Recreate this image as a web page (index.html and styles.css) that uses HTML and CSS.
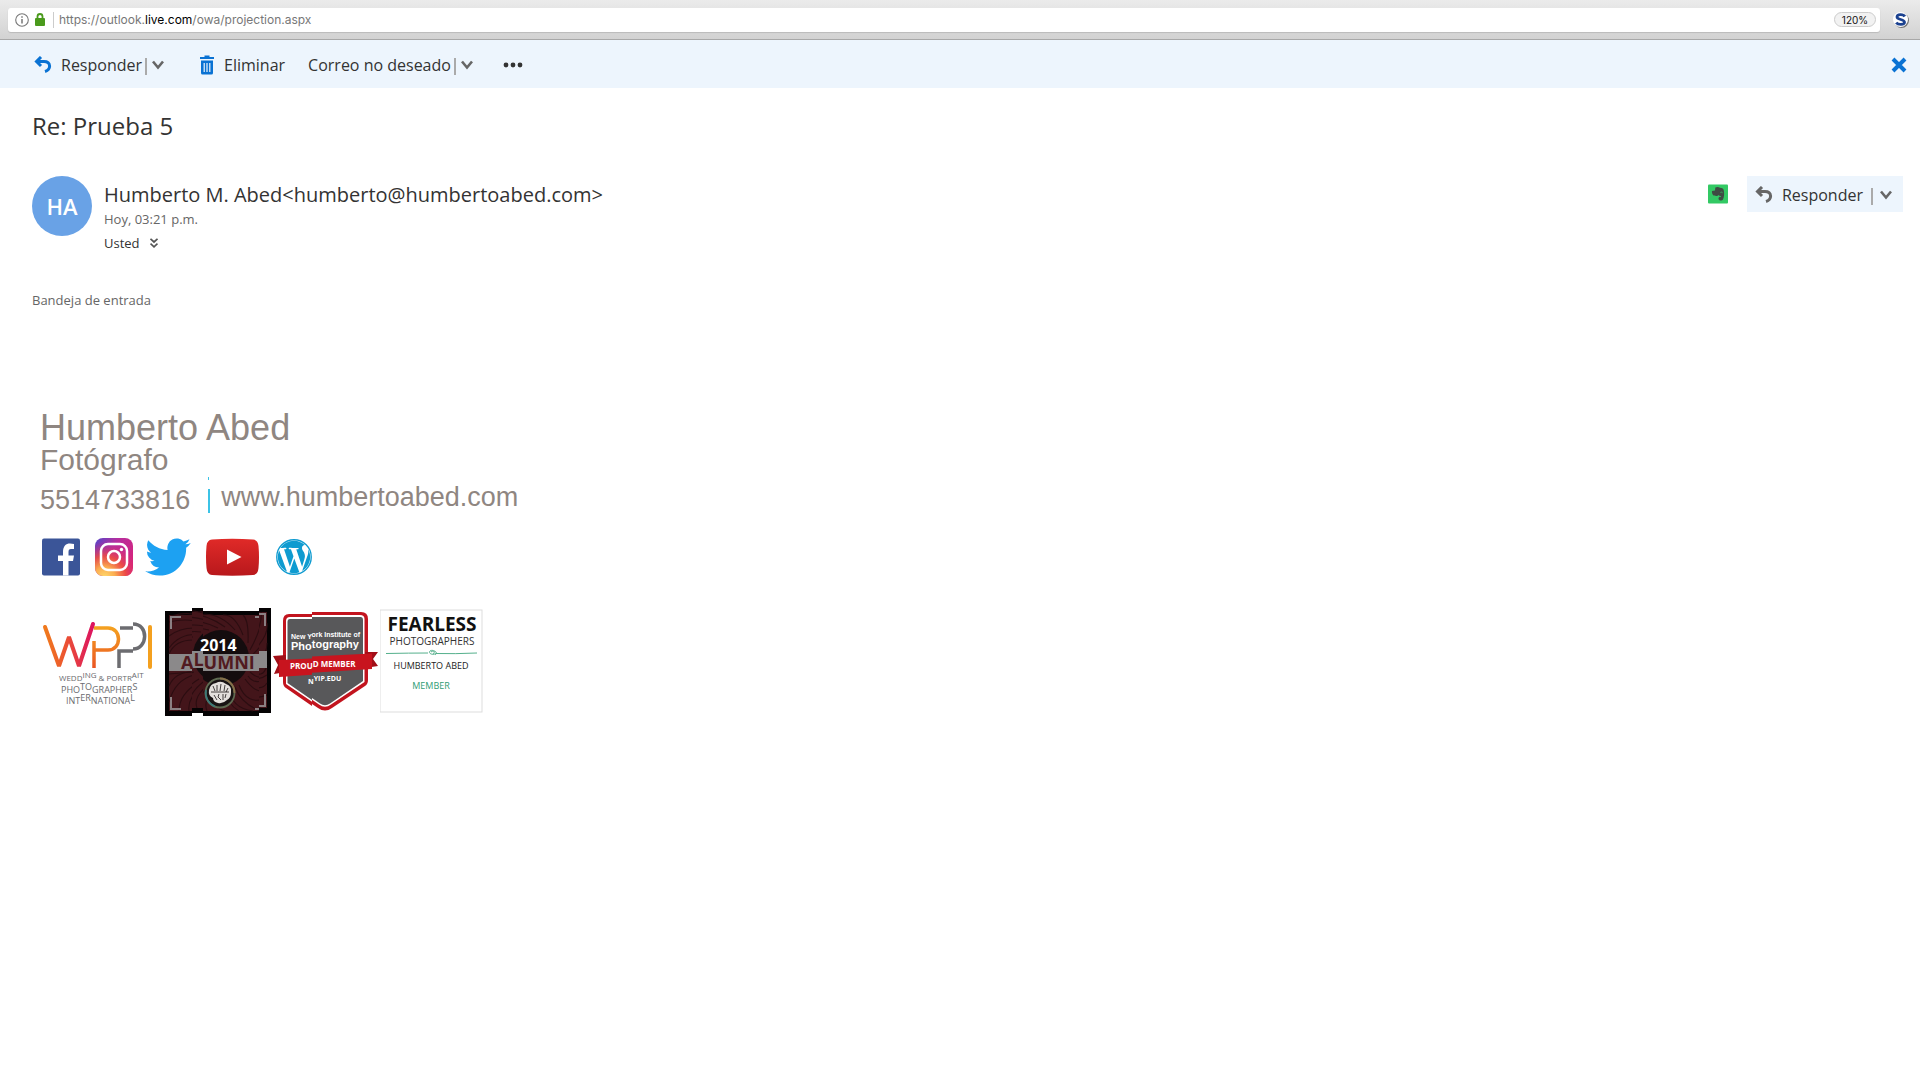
FILE: index.html
```
<!DOCTYPE html>
<html lang="es">
<head>
    <meta charset="UTF-8">
    <meta name="viewport" content="width=device-width, initial-scale=1.0">
    <title>Re: Prueba 5</title>
    <link rel="stylesheet" href="styles.css">
</head>
<body>
    <!-- Barra de direcciones -->
    <div class="navegador">
        <div class="url-box">
            <svg width="14" height="14" viewBox="0 0 14 14"><circle cx="7" cy="7" r="6.3" fill="none" stroke="#777" stroke-width="1.1"/><path d="M7 6v4.500M7 3.200v1.600" stroke="#777" stroke-width="1.500"/></svg>
            <svg width="10" height="13" viewBox="0 0 10 13"><path d="M2.500 6V3.500a2.500 2.500 0 0 1 5 0V6" fill="none" stroke="#4a9a1c" stroke-width="1.800"/><rect y="5" width="10" height="8" rx="1" fill="#4a9a1c"/></svg>
            <div class="url">https://outlook.<b>live.com</b>/owa/projection.aspx</div>
            <button class="zoom">120%</button>
        </div>
        <button class="extension" aria-label="Extensión">
            <svg width="18" height="18" viewBox="0 0 18 18"><circle cx="9.500" cy="9.500" r="7.500" fill="#777"/><circle cx="8.500" cy="8.500" r="7.500" fill="#fff"/><path d="M12.800 5.500C11.500 3 5 2.800 5 6C5 9 12.500 8 12.500 11.200C12.500 14 6 14 4.200 11.600" fill="none" stroke="#1c4290" stroke-width="2.800"/></svg>
        </button>
    </div>

    <!-- Barra de acciones -->
    <div class="acciones">
        <button class="accion">
            <svg width="18" height="18" viewBox="0 0 18 18"><path d="M7 1L2.500 5.500L7 10M3 5.500H10C17 5.500 17.500 13.500 11 15.500" fill="none" stroke="#0a72d3" stroke-width="3"/></svg>
            Responder
        </button>
        <span class="sep"></span>
        <button class="flecha" aria-label="Más opciones de respuesta"><svg width="12" height="10" viewBox="0 0 12 10"><path d="M1 1.500L6 7.500L11 1.500" fill="none" stroke="#666" stroke-width="2.600"/></svg></button>
        <button class="accion eliminar">
            <svg width="16" height="20" viewBox="0 0 16 20"><path d="M1 2H5.500V.5H10.500V2H15V4H1ZM2 5.500H14V18a1.500 1.500 0 0 1-1.500 1.500H3.500a1.500 1.500 0 0 1-1.500-1.500Z" fill="#0a72d3"/><path d="M5.200 8v9M8 8v9M10.800 8v9" stroke="#edf5fd" stroke-width="1.200"/></svg>
            Eliminar
        </button>
        <button class="accion no-deseado">Correo no deseado</button>
        <span class="sep"></span>
        <button class="flecha" aria-label="Más opciones de correo no deseado"><svg width="12" height="10" viewBox="0 0 12 10"><path d="M1 1.500L6 7.500L11 1.500" fill="none" stroke="#666" stroke-width="2.600"/></svg></button>
        <button class="mas" aria-label="Más comandos"><svg width="20" height="6" viewBox="0 0 20 6" fill="#333"><circle cx="3" cy="3" r="2.400"/><circle cx="10" cy="3" r="2.400"/><circle cx="17" cy="3" r="2.400"/></svg></button>
        <button class="cerrar" aria-label="Cerrar"><svg width="16" height="16" viewBox="0 0 16 16"><path d="M2 2L14 14M14 2L2 14" stroke="#0a72d3" stroke-width="4"/></svg></button>
    </div>

    <!-- Mensaje -->
    <div class="mensaje">
        <h1>Re: Prueba 5</h1>
        <div class="cabecera">
            <div class="avatar">HA</div>
            <div class="datos">
                <div class="remitente">Humberto M. Abed&lt;humberto@humbertoabed.com&gt;</div>
                <div class="fecha">Hoy, 03:21 p.m.</div>
                <div class="para">Usted
                    <button class="expandir" aria-label="Ver destinatarios"><svg width="8" height="10" viewBox="0 0 8 10"><path d="M.5 .8L4 4L7.500 .8M.5 5.600L4 8.800L7.500 5.600" fill="none" stroke="#555" stroke-width="1.700"/></svg></button>
                </div>
            </div>
            <button class="evernote" aria-label="Evernote">
                <svg width="20" height="20" viewBox="0 0 20 20"><rect width="20" height="19" y=".5" rx="1" fill="#33c964"/><path d="M4 7L7 6.500L7.300 3.500C9 2.500 11 3 12 3.800C14.500 4 15.500 4.500 15.800 6.500C16.500 10 16 13.500 15 15.500C14 17 10.500 17 10.500 14.500C10.500 13 12 12.600 13 13V12C11.500 12 11 11.500 10.500 11C10 12.500 6 12 5 11C4 9.500 3.800 8 4 7Z" fill="#3f4b43"/><path d="M12.500 8.500q1-.8 2 .2" fill="none" stroke="#33c964" stroke-width=".8"/></svg>
            </button>
            <div class="responder">
                <button class="accion">
                    <svg width="18" height="18" viewBox="0 0 18 18"><path d="M7 1L2.500 5.500L7 10M3 5.500H10C17 5.500 17.500 13.500 11 15.500" fill="none" stroke="#666" stroke-width="3"/></svg>
                    Responder
                </button>
                <span class="sep"></span>
                <button class="flecha" aria-label="Más opciones de respuesta"><svg width="12" height="10" viewBox="0 0 12 10"><path d="M1 1.500L6 7.500L11 1.500" fill="none" stroke="#666" stroke-width="2.600"/></svg></button>
            </div>
        </div>
        <div class="carpeta">Bandeja de entrada</div>

        <!-- Firma -->
        <div class="firma">
            <div class="nombre">Humberto Abed</div>
            <div class="puesto">Fotógrafo</div>
            <div class="contacto">
                <span class="telefono">5514733816</span>
                <svg class="raya" width="4" height="38" viewBox="0 0 4 38"><path d="M1 1h1v3H1ZM1 13h2v24H1Z" fill="#3cc3e6"/></svg>
                <a href="#">www.humbertoabed.com</a>
            </div>

            <div class="redes">
                <a class="facebook" href="#" aria-label="Facebook">
                    <svg width="38" height="38" viewBox="0 0 38 38"><rect y=".5" width="38" height="37" rx="2" fill="#3b5598"/><path d="M21 37.500V23H16V17.500H21V14C21 8 24 5.500 28 5.500Q30 5.500 32 6V11H29C27 11 26.500 12 26.500 14V17.500H32L31 23H26.500V37.500Z" fill="#fff"/></svg>
                </a>
                <a class="instagram" href="#" aria-label="Instagram">
                    <svg width="38" height="38" viewBox="0 0 38 38">
                        <defs>
                            <linearGradient id="ig-base" x1="0" y1="0" x2="1" y2=".6"><stop offset="0" stop-color="#5345c8"/><stop offset=".45" stop-color="#b52ea0"/><stop offset="1" stop-color="#d6247c"/></linearGradient>
                            <radialGradient id="ig-luz" cx=".25" cy="1.050" r=".95"><stop offset="0" stop-color="#ffdc6e"/><stop offset=".3" stop-color="#fbad50"/><stop offset=".6" stop-color="#f0503c" stop-opacity=".85"/><stop offset="1" stop-color="#d6247c" stop-opacity="0"/></radialGradient>
                        </defs>
                        <rect width="38" height="38" rx="8" fill="url(#ig-base)"/>
                        <rect width="38" height="38" rx="8" fill="url(#ig-luz)"/>
                        <rect x="6" y="6" width="26" height="26" rx="7" fill="none" stroke="#fff" stroke-width="2.500"/>
                        <circle cx="19" cy="19" r="6" fill="none" stroke="#fff" stroke-width="2.500"/>
                        <circle cx="26.500" cy="11.500" r="1.700" fill="#fff"/>
                    </svg>
                </a>
                <a class="twitter" href="#" aria-label="Twitter">
                    <svg width="46" height="38" viewBox="0 2 24 20"><path d="M23.953 4.570a10 10 0 01-2.825.775 4.958 4.958 0 002.163-2.723c-.951.555-2.005.959-3.127 1.184a4.920 4.920 0 00-8.384 4.482C7.690 8.095 4.067 6.130 1.640 3.162a4.822 4.822 0 00-.666 2.475c0 1.710.870 3.213 2.188 4.096a4.904 4.904 0 01-2.228-.616v.060a4.923 4.923 0 003.946 4.827 4.996 4.996 0 01-2.212.085 4.936 4.936 0 004.604 3.417 9.867 9.867 0 01-6.102 2.105c-.390 0-.779-.023-1.170-.067a13.995 13.995 0 007.557 2.209c9.053 0 13.998-7.496 13.998-13.985 0-.210 0-.420-.015-.630A9.935 9.935 0 0024 4.590z" fill="#1da1f2"/></svg>
                </a>
                <a class="youtube" href="#" aria-label="YouTube">
                    <svg width="53" height="38" viewBox="0 0 53 38"><defs><linearGradient id="yt" x2="0" y2="1"><stop stop-color="#e02a28"/><stop offset="1" stop-color="#b8181c"/></linearGradient></defs><path d="M6 1.500Q26 0 47 1.500Q52 2 52.500 8Q53.500 19 52.500 30Q52 36.500 47 37Q26 38.500 6 37Q1 36.500 .5 30Q-.5 19 .5 8Q1 2 6 1.500Z" fill="url(#yt)"/><path d="M21 11.500L35.500 19L21 26.500Z" fill="#fff"/></svg>
                </a>
                <a class="wordpress" href="#" aria-label="WordPress">
                    <svg width="36" height="36" viewBox="0 0 24 24" fill="#0f9bd0"><circle cx="12" cy="12" r="11.500" fill="none" stroke="#0f9bd0" stroke-width=".9"/><path d="M21.469 6.825c.84 1.537 1.318 3.3 1.318 5.175 0 3.979-2.156 7.456-5.363 9.325l3.295-9.527c.615-1.540.820-2.771.820-3.864 0-.405-.026-.780-.070-1.110m-7.981.105c.647-.030 1.232-.105 1.232-.105.582-.075.514-.930-.067-.899 0 0-1.755.135-2.880.135-1.064 0-2.850-.150-2.850-.150-.585-.030-.661.855-.075.885 0 0 .540.061 1.125.090l1.680 4.605-2.370 7.080L5.354 6.900c.649-.030 1.234-.100 1.234-.100.585-.075.516-.930-.065-.896 0 0-1.746.138-2.874.138-.200 0-.438-.008-.690-.015C4.911 3.150 8.235 1.215 12 1.215c2.809 0 5.365 1.072 7.286 2.833-.046-.003-.091-.009-.141-.009-1.060 0-1.812.923-1.812 1.914 0 .890.513 1.643 1.060 2.531.411.720.890 1.643.890 2.977 0 .915-.354 1.994-.821 3.479l-1.075 3.585-3.900-11.610.001.014zM12 22.784c-1.059 0-2.081-.153-3.048-.437l3.237-9.406 3.315 9.087c.024.053.050.101.078.149-1.120.393-2.325.607-3.582.607M1.211 12c0-1.564.336-3.050.935-4.390L7.290 21.709C3.694 19.960 1.212 16.271 1.211 12"/></svg>
                </a>
            </div>

            <div class="insignias">
                <svg class="wppi" width="120" height="112" viewBox="0 0 120 112">
                    <defs>
                        <linearGradient id="w" gradientUnits="userSpaceOnUse" x1="5" y1="0" x2="53" y2="0"><stop stop-color="#f07a1c"/><stop offset=".4" stop-color="#ec5630"/><stop offset="1" stop-color="#dc1360"/></linearGradient>
                        <linearGradient id="p" x1="0" y1="0" x2="0" y2="1"><stop stop-color="#f4a01f"/><stop offset="1" stop-color="#ea5423"/></linearGradient>
                    </defs>
                    <path d="M5 21L19 60L29 31L39 60L53 18" fill="none" stroke="url(#w)" stroke-width="4" stroke-linejoin="bevel" stroke-linecap="round"/>
                    <path d="M54 62V35M54 22H68C82 22 82 44 68 44H54" fill="none" stroke="url(#p)" stroke-width="3.500"/>
                    <path d="M79 62V45H93M80 22H93M93 18C109 18 108 43 93 43" fill="none" stroke="#6c6c70" stroke-width="3.500"/>
                    <path d="M110 21V61" stroke="#f4a01f" stroke-width="4" stroke-linecap="round"/>
                    <g fill="#6a6a6e">
                        <text class="t8" x="19" y="75">WEDD<tspan dy="-3">ING</tspan><tspan dy="3"> &amp; PORTR</tspan><tspan dy="-3">AIT</tspan></text>
                        <text class="t9" x="21" y="87">PHO<tspan dy="-3">TO</tspan><tspan dy="3">GRAPHER</tspan><tspan dy="-3">S</tspan></text>
                        <text class="t9" x="26" y="98">INT<tspan dy="-3">ER</tspan><tspan dy="3">NATIONA</tspan><tspan dy="-3">L</tspan></text>
                    </g>
                </svg>

                <svg class="alumni" width="110" height="112" viewBox="0 0 110 112">
                    <defs>
                        <clipPath id="al-1"><path d="M0 0H29V112H0ZM40 0H96V112H40Z"/></clipPath>
                        <clipPath id="al-2"><path d="M29 0H40V115H29ZM96 0H110V115H96Z"/></clipPath>
                        <g id="al-fondo">
                            <rect x="2" y="5" width="106" height="105" fill="#050304"/>
                            <rect x="6" y="9" width="98" height="96" fill="#43151a"/>
                            <g fill="none" stroke="#2b0d11" stroke-width="1.100">
                                <path d="M55 22Q30 10 6 16M62 21Q35 2 8 10M72 24Q55 5 36 9M80 29Q72 8 60 9M85 37Q86 14 80 9M87 44Q100 20 98 9M88 50Q106 34 104 20"/>
                                <path d="M46 24Q22 18 6 30M38 29Q18 26 6 42M88 60Q104 56 104 40M87 66Q100 78 104 62M82 73Q96 92 104 80M76 79Q84 100 104 92M67 83Q68 102 90 105M56 84Q48 102 62 105M45 82Q30 94 34 105M36 76Q16 88 16 105M31 69Q12 74 6 96M29 66Q12 66 6 80"/>
                                <path d="M30 34Q12 34 6 48M6 68L28 66M26 105Q24 92 40 79M44 105Q40 96 50 83M76 105Q64 98 62 84M98 105Q78 98 72 81M104 72Q92 80 85 70"/>
                            </g>
                            <circle cx="58" cy="52" r="28" fill="#140c0e"/>
                            <rect x="6" y="48" width="98" height="17" fill="#8b898a"/>
                            <path d="M8 23V11H18M92 11H102V23M8 91V103H18M92 103H102V91" fill="none" stroke="#8b8083" stroke-width="2"/>
                        </g>
                    </defs>
                    <g clip-path="url(#al-1)"><use href="#al-fondo"/></g>
                    <g clip-path="url(#al-2)"><use href="#al-fondo" y="-3"/></g>
                    <text class="t16 negrita" x="37" y="45" fill="#fff">2014</text>
                    <text class="t18 negrita" x="18" y="63" fill="#511a20">A<tspan dy="-3">L</tspan><tspan dy="3">UMNI</tspan></text>
                    <circle cx="57" cy="87" r="14.500" fill="#191414" stroke="#5f6b52" stroke-width="1.800"/>
                    <path d="M57 72.500A14.500 14.500 0 0 1 71.500 87" fill="none" stroke="#86704a" stroke-width="1.800"/>
                    <path d="M43 84A14.500 14.500 0 0 0 52 100.500" fill="none" stroke="#3d7a78" stroke-width="1.800"/>
                    <path d="M46 84Q47 78 53 77Q58 74 63 78Q69 80 68 86Q68 92 64 94Q60 98 55 97Q50 96 50 92Q45 90 46 84Z" fill="#e4e0dd"/>
                    <path d="M50 80l2 5M54 79v6M58 78l-1 7M62 79l-1 6M65 82l-2 4M48 86h18M51 89l3 5M56 88l-1 3 3 3M60 88v6M63 88l-1 4" stroke="#191414" stroke-width=".8" fill="none"/>
                </svg>

                <svg class="nyip" width="108" height="112" viewBox="0 0 108 112">
                    <defs>
                        <clipPath id="ny-1"><path d="M0 0H40V112H0Z"/></clipPath>
                        <clipPath id="ny-2"><path d="M40 0H108V112H40Z"/></clipPath>
                        <g id="escudo">
                            <path d="M17 6H89Q96 6 96 13V74Q96 78 93 80L60 102Q53 107 46 102L14 80Q11 78 11 74V13Q11 6 17 6Z" fill="#c2141e"/>
                            <path d="M18 9H88Q92.500 9 92.500 13V76L59 98.500Q53 103 47 98.500L14 76V13Q14 9 18 9Z" fill="#fff"/>
                            <path d="M18 11H88.500Q91 11 91 14V75L58 97.500Q53 101 48 97.500L15.500 75V14Q15.500 11 18 11Z" fill="#58585a"/>
                            <path d="M1 48L14 47V64L2 66L6 57ZM93 46L106 46L101 53L106 60L93 62Z" fill="#a10f18"/>
                            <path d="M7 52L100 47.500V63L7 69Z" fill="#c8141e"/>
                        </g>
                    </defs>
                    <g clip-path="url(#ny-1)"><use href="#escudo" y="2"/></g>
                    <g clip-path="url(#ny-2)"><use href="#escudo"/></g>
                    <g class="negrita" fill="#fff">
                        <text class="t7 titulo" x="19" y="33">New Y<tspan dy="-2">ork Institute of</tspan></text>
                        <text class="t11 titulo" x="19" y="44">Pho<tspan dy="-2">tography</tspan></text>
                        <text class="t8" x="18" y="63">PROU<tspan dy="-2">D MEMBER</tspan></text>
                        <text class="t7" x="36" y="78">N<tspan dy="-3">YIP.EDU</tspan></text>
                    </g>
                </svg>

                <svg class="fearless" width="104" height="112" viewBox="0 0 104 112">
                    <rect x="0" y="4" width="102" height="102" fill="#fff" stroke="#ddd"/>
                    <text class="t19 negrita" x="52" y="25" text-anchor="middle" fill="#111">FEARLESS</text>
                    <text class="t10" x="52" y="39" text-anchor="middle" fill="#333">PHOTOGRAPHERS</text>
                    <path d="M6 47.500Q30 47 48 47M56 47.500Q75 48 97 47" fill="none" stroke="#55b08c"/>
                    <path d="M57 47C52 50 48 47 50 45C53 43 56 46 53 48M51 46C55 43 58 47 55 49" fill="none" stroke="#55b08c"/>
                    <text class="t9" x="51" y="63" text-anchor="middle" fill="#222">HUMBERTO ABED</text>
                    <text class="t9" x="51" y="83" text-anchor="middle" fill="#2f9c74">MEMBER</text>
                </svg>
            </div>
        </div>
    </div>
</body>
</html>
```

FILE: styles.css
```
* {
    box-sizing: border-box;
}

body {
    margin: 0;
    font-family: "Open Sans", sans-serif;
    color: #333;
    background: #fff;
}

svg {
    display: block;
    flex: none;
}

button {
    border: 0;
    padding: 0;
    background: none;
    font: inherit;
    color: inherit;
    cursor: pointer;
}

a {
    color: inherit;
    text-decoration: none;
}

/* Barra de direcciones */
.navegador {
    display: flex;
    align-items: center;
    gap: 12px;
    height: 40px;
    padding: 0 10px 0 8px;
    background: linear-gradient(#ebebeb, #d2d2d2);
    border-bottom: 1px solid #a8a8a8;
}

.url-box {
    flex: 1;
    display: flex;
    align-items: center;
    gap: 6px;
    height: 24px;
    padding: 0 4px 0 7px;
    background: #fff;
    border-radius: 3px;
    box-shadow: 0 1px 1px #bbb;
}

.url {
    flex: 1;
    margin-left: 2px;
    padding-left: 5px;
    border-left: 1px solid #ccc;
    font-family: Inter, sans-serif;
    font-size: 12px;
    line-height: 16px;
    color: #777;
}

.url b {
    font-weight: 400;
    color: #000;
}

.zoom {
    width: 42px;
    height: 15px;
    border: 1px solid #ccc;
    border-radius: 8px;
    background: #f2f2f2;
    font-family: Inter, sans-serif;
    font-size: 10px;
    line-height: 12px;
    color: #111;
}

/* Barra de acciones */
.acciones {
    display: flex;
    align-items: center;
    height: 48px;
    padding: 1px 13px 0 34px;
    background: #edf5fd;
}

.accion {
    display: flex;
    align-items: center;
    gap: 9px;
    font-size: 16px;
    line-height: 24px;
}

.sep {
    width: 2px;
    height: 17px;
    margin: 4px 5px 0 3px;
    background: #aaa;
}

.eliminar {
    margin-left: 35px;
}

.no-deseado {
    margin-left: 23px;
}

.mas {
    margin-left: 30px;
}

.cerrar {
    margin-left: auto;
}

/* Mensaje */
.mensaje {
    padding: 22px 17px 22px 32px;
}

h1 {
    margin: 0 0 34px;
    font-size: 24px;
    font-weight: 400;
    line-height: 32px;
}

.cabecera {
    display: flex;
    align-items: flex-start;
}

.avatar {
    width: 60px;
    height: 60px;
    border-radius: 50%;
    background: #69a2e6;
    color: #fff;
    font-size: 22px;
    font-weight: 600;
    line-height: 60px;
    text-align: center;
}

.datos {
    flex: 1;
    padding: 7px 0 0 12px;
}

.remitente {
    font-size: 20px;
    line-height: 24px;
}

.fecha,
.para,
.carpeta {
    font-size: 13px;
    line-height: 24px;
}

.fecha,
.carpeta {
    color: #666;
}

.para {
    display: flex;
    align-items: center;
    gap: 10px;
}

.evernote {
    margin: 8px 19px 0 0;
}

.responder {
    display: flex;
    align-items: center;
    height: 36px;
    padding: 1px 11px 0 8px;
    background: #edf5fd;
}

.responder .sep {
    margin-left: 8px;
    margin-right: 7px;
}

.carpeta {
    margin-top: 33px;
}

/* Firma */
.firma {
    margin-top: 98px;
    padding-left: 8px;
    font-family: "Liberation Sans", Arial, sans-serif;
    color: #8f8681;
}

.nombre {
    font-size: 36px;
    line-height: 36px;
}

.puesto {
    font-size: 30px;
    line-height: 28px;
}

.contacto {
    display: flex;
    align-items: flex-start;
    font-size: 27px;
    line-height: 46px;
}

.telefono {
    padding-top: 3px;
}

.raya {
    margin: 2px 10px 0 17px;
}

.redes {
    display: flex;
    align-items: center;
    gap: 15px;
    margin-top: 15px;
    padding-left: 2px;
}

.twitter {
    margin-left: -3px;
}

.wordpress {
    margin-left: 2px;
}

.insignias {
    display: flex;
    margin-top: 30px;
    font-family: "Open Sans", sans-serif;
}

.wppi {
    margin-right: 3px;
}

.nyip {
    margin-left: -1px;
}

.negrita {
    font-weight: 700;
}

.titulo {
    font-family: "Liberation Sans", Arial, sans-serif;
}

.t7 {
    font-size: 7px;
}

.t8 {
    font-size: 8px;
}

.t9 {
    font-size: 9px;
}

.t10 {
    font-size: 10px;
}

.t11 {
    font-size: 11px;
}

.t16 {
    font-size: 16px;
}

.t18 {
    font-size: 18px;
}

.t19 {
    font-size: 19px;
}
```
